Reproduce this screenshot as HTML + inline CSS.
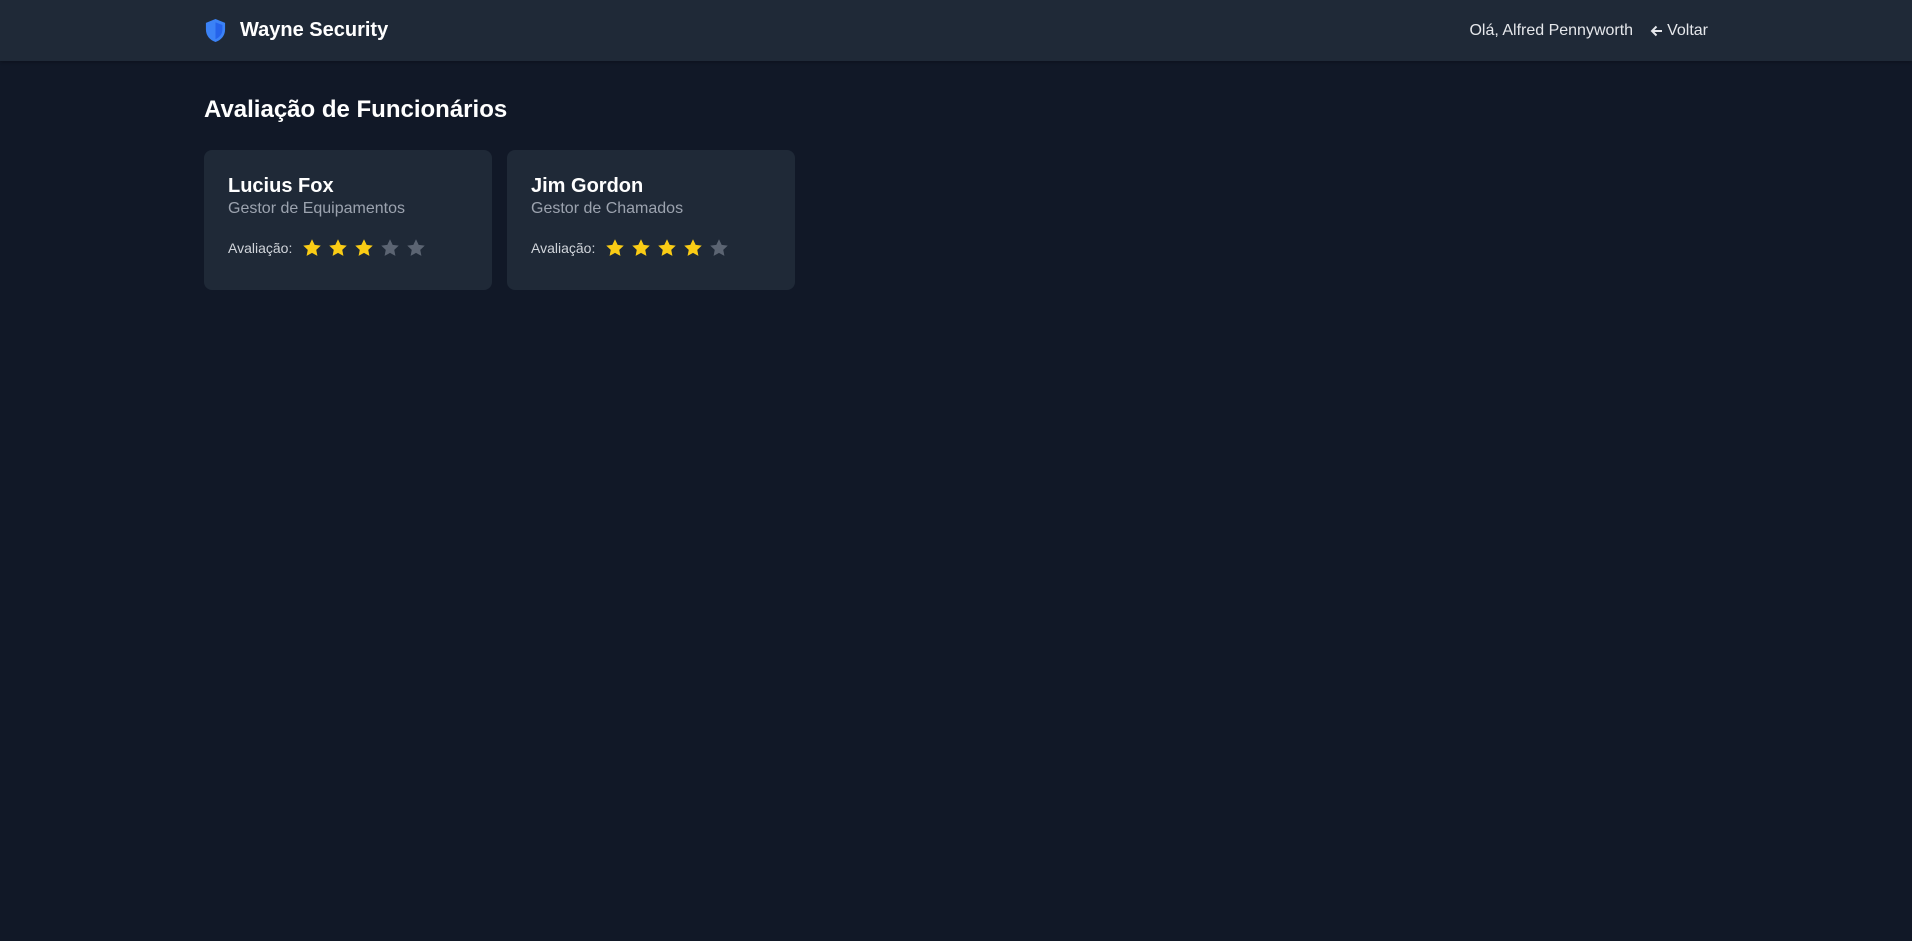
<!DOCTYPE html>
<html><head><meta charset="utf-8"><style>
*{margin:0;padding:0;box-sizing:border-box}
body{width:1912px;height:941px;background:#111827;font-family:"Liberation Sans",Arial,sans-serif;color:#fff;overflow:hidden}
header{height:61px;background:#1f2937;box-shadow:0 1px 3px rgba(0,0,0,.3)}
.wrap{width:1536px;margin:0 auto;padding:0 16px;position:relative}
header .wrap{height:61px;display:flex;align-items:center;justify-content:space-between}
.brand{display:flex;align-items:center;font-size:20px;font-weight:bold}
.brand svg{margin-right:13px}
.right{display:flex;align-items:center;font-size:16px;color:#e5e7eb}
.right .back{display:flex;align-items:center;margin-left:16px}
h1{font-size:24px;font-weight:bold;line-height:28px;position:absolute;top:35px;left:16px}
.cards{position:absolute;top:89px;left:16px;display:flex;gap:15px}
.card{width:288px;height:140px;background:#1f2937;border-radius:8px;padding:22px 24px}
.name{font-size:20px;font-weight:bold;line-height:28px}
.role{font-size:16px;color:#9ca3af;line-height:20px;margin-top:-1px}
.rate{display:flex;align-items:center;margin-top:19px;font-size:14px;color:#d1d5db}
.rate span{margin-right:10px}
.rate svg{margin-right:6px}
</style></head><body>
<header><div class="wrap">
<div class="brand"><svg width="23" height="25" viewBox="0 0 24 26"><path d="M12 1 L22 5 V12 C22 19 17 23.5 12 25 C7 23.5 2 19 2 12 V5 Z" fill="#3b82f6"/><path d="M12 4.5 L19.2 7.3 V12 C19.2 17 16 20.5 12 22 Z" fill="#2563eb"/></svg>Wayne Security</div>
<div class="right"><span>Olá, Alfred Pennyworth</span><span class="back"><svg width="16" height="16" viewBox="0 0 16 16" style="margin-right:2px"><path d="M13 8H3M7.5 3.5 3 8l4.5 4.5" stroke="#e5e7eb" stroke-width="2" fill="none"/></svg>Voltar</span></div>
</div></header>
<div class="wrap">
<h1>Avaliação de Funcionários</h1>
<div class="cards">
<div class="card"><div class="name">Lucius Fox</div><div class="role">Gestor de Equipamentos</div>
<div class="rate"><span>Avaliação:</span>
<svg width="20" height="20" viewBox="0 0 24 24"><path d="M12 1.5l3.2 6.8 7.3.9-5.4 5 1.4 7.3L12 17.9l-6.5 3.6 1.4-7.3-5.4-5 7.3-.9z" fill="#facc15"/></svg>
<svg width="20" height="20" viewBox="0 0 24 24"><path d="M12 1.5l3.2 6.8 7.3.9-5.4 5 1.4 7.3L12 17.9l-6.5 3.6 1.4-7.3-5.4-5 7.3-.9z" fill="#facc15"/></svg>
<svg width="20" height="20" viewBox="0 0 24 24"><path d="M12 1.5l3.2 6.8 7.3.9-5.4 5 1.4 7.3L12 17.9l-6.5 3.6 1.4-7.3-5.4-5 7.3-.9z" fill="#facc15"/></svg>
<svg width="20" height="20" viewBox="0 0 24 24"><path d="M12 1.5l3.2 6.8 7.3.9-5.4 5 1.4 7.3L12 17.9l-6.5 3.6 1.4-7.3-5.4-5 7.3-.9z" fill="#5b6472"/></svg>
<svg width="20" height="20" viewBox="0 0 24 24"><path d="M12 1.5l3.2 6.8 7.3.9-5.4 5 1.4 7.3L12 17.9l-6.5 3.6 1.4-7.3-5.4-5 7.3-.9z" fill="#5b6472"/></svg>
</div></div>
<div class="card"><div class="name">Jim Gordon</div><div class="role">Gestor de Chamados</div>
<div class="rate"><span>Avaliação:</span>
<svg width="20" height="20" viewBox="0 0 24 24"><path d="M12 1.5l3.2 6.8 7.3.9-5.4 5 1.4 7.3L12 17.9l-6.5 3.6 1.4-7.3-5.4-5 7.3-.9z" fill="#facc15"/></svg>
<svg width="20" height="20" viewBox="0 0 24 24"><path d="M12 1.5l3.2 6.8 7.3.9-5.4 5 1.4 7.3L12 17.9l-6.5 3.6 1.4-7.3-5.4-5 7.3-.9z" fill="#facc15"/></svg>
<svg width="20" height="20" viewBox="0 0 24 24"><path d="M12 1.5l3.2 6.8 7.3.9-5.4 5 1.4 7.3L12 17.9l-6.5 3.6 1.4-7.3-5.4-5 7.3-.9z" fill="#facc15"/></svg>
<svg width="20" height="20" viewBox="0 0 24 24"><path d="M12 1.5l3.2 6.8 7.3.9-5.4 5 1.4 7.3L12 17.9l-6.5 3.6 1.4-7.3-5.4-5 7.3-.9z" fill="#facc15"/></svg>
<svg width="20" height="20" viewBox="0 0 24 24"><path d="M12 1.5l3.2 6.8 7.3.9-5.4 5 1.4 7.3L12 17.9l-6.5 3.6 1.4-7.3-5.4-5 7.3-.9z" fill="#5b6472"/></svg>
</div></div>
</div>
</div>
</body></html>
